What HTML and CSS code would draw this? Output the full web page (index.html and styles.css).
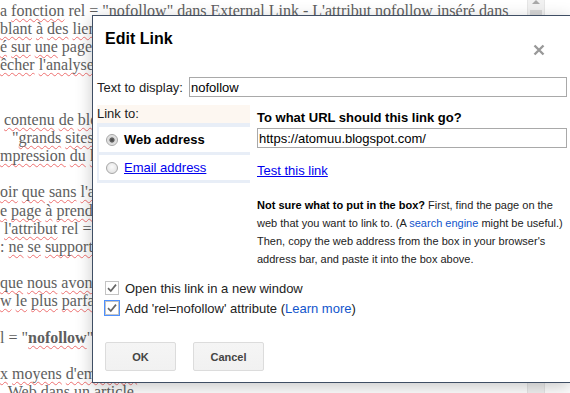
FILE: index.html
```html
<!DOCTYPE html>
<html lang="fr">
<head>
    <meta charset="UTF-8">
    <meta name="viewport" content="width=device-width, initial-scale=1.0">
    <title>Edit Link</title>
    <link rel="stylesheet" href="styles.css">
</head>
<body>
    <div class="page">
        <div class="doc">
            <div class="line">a <span class="sp">fonction</span> rel = "nofollow" dans External Link - L'attribut nofollow inséré dans</div>
            <div class="line"><span class="sp">blant</span> <span class="sp">à</span> <span class="sp">des</span> <span class="sp">liens</span> externes vers des pages non fiables</div>
            <div class="line"><span class="sp">é</span> <span class="sp">sur</span> <span class="sp">une</span> page de votre blog permet de</div>
            <div class="line"><span class="sp">êcher</span> <span class="sp">l'analyse</span> de ces liens par les robots</div>
            <div class="line"></div>
            <div class="line"></div>
            <div class="line"> <span class="sp">contenu</span> <span class="sp">de</span> <span class="sp">blog</span> qui pointe vers</div>
            <div class="line">   "<span class="sp">grands</span> <span class="sp">sites</span> <span class="sp">g</span>énéralistes"</div>
            <div class="line"><span class="sp">mpression</span> <span class="sp">du</span> <span class="sp">lecteur</span></div>
            <div class="line"></div>
            <div class="line"><span class="sp">oir</span> <span class="sp">que</span> <span class="sp">sans</span> <span class="sp">l'attribut</span></div>
            <div class="line"><span class="sp">e</span> <span class="sp">page</span> <span class="sp">à</span> <span class="sp">prendre</span></div>
            <div class="line"> <span class="sp">l'attribut</span> rel = nofollow</div>
            <div class="line">: <span class="sp">ne</span> <span class="sp">se</span> <span class="sp">supporte</span> pas</div>
            <div class="line"></div>
            <div class="line"><span class="sp">que</span> <span class="sp">nous</span> <span class="sp">avons</span> vu</div>
            <div class="line"><span class="sp">w</span> <span class="sp">le</span> <span class="sp">plus</span> <span class="sp">parfait</span></div>
            <div class="line"></div>
            <div class="line">l = "<b class="sp">nofollow</b>"</div>
            <div class="line"></div>
            <div class="line"><span class="sp">x</span> <span class="sp">moyens</span> <span class="sp">d'employer</span> ce</div>
            <div class="line">  Web dans un article</div>
        </div>
        <div class="scrollbar">
            <div class="scroll-arrow"></div>
            <div class="scroll-thumb"></div>
        </div>
    </div>

    <div class="dialog">
        <div class="dialog-head">Edit Link</div>
        <svg class="dialog-close" width="12" height="12" viewBox="0 0 12 12">
            <path d="M1.5 1.5 L10.5 10.5 M10.5 1.5 L1.5 10.5" stroke="#999" stroke-width="2.4" fill="none"/>
        </svg>

        <div class="field-row">
            <label class="field-label">Text to display:</label>
            <input class="text-input display-input" type="text" value="nofollow">
        </div>

        <div class="link-main">
            <div class="link-types">
                <div class="link-types-head">Link to:</div>
                <div class="link-types-list">
                    <div class="link-type">
                        <span class="radio checked"></span>
                        <span class="link-type-label selected">Web address</span>
                    </div>
                    <div class="link-type">
                        <span class="radio"></span>
                        <a class="link-type-label plain-link">Email address</a>
                    </div>
                </div>
            </div>

            <div class="link-target">
                <div class="target-title">To what URL should this link go?</div>
                <input class="text-input url-input" type="text" value="https://atomuu.blogspot.com/">
                <div class="test-link"><a class="plain-link">Test this link</a></div>
                <div class="help">
                    <b>Not sure what to put in the box?</b> First, find the page on the<br>
                    web that you want to link to. (A <a class="blue-link">search engine</a> might be useful.)<br>
                    Then, copy the web address from the box in your browser's<br>
                    address bar, and paste it into the box above.
                </div>
            </div>
        </div>

        <div class="options">
            <div class="option">
                <svg class="check" width="14" height="14" viewBox="0 0 14 14">
                    <rect x="0.5" y="0.5" width="13" height="13" fill="#fff" stroke="#c4c4c4"/>
                    <path d="M3 7.2 L5.8 10 L11 3.6" stroke="#666" stroke-width="1.7" fill="none"/>
                </svg>
                <span>Open this link in a new window</span>
            </div>
            <div class="option">
                <svg class="check focused" width="14" height="14" viewBox="0 0 14 14">
                    <rect x="0.5" y="0.5" width="13" height="13" fill="#fff" stroke="#c4c4c4"/>
                    <path d="M3 7.2 L5.8 10 L11 3.6" stroke="#666" stroke-width="1.7" fill="none"/>
                </svg>
                <span>Add 'rel=nofollow' attribute (<a class="blue-link">Learn more</a>)</span>
            </div>
        </div>

        <div class="buttons">
            <button class="btn">OK</button>
            <button class="btn">Cancel</button>
        </div>
    </div>
</body>
</html>
```

FILE: styles.css
```css
* {
    margin: 0;
    padding: 0;
    box-sizing: border-box;
}

body {
    background: #fff;
    overflow: hidden;
}

/* page behind the dialog */

.page {
    display: flex;
    height: 393px;
}

.doc {
    width: 527px;
    padding-top: 2px;
    overflow: hidden;
    font-family: "Liberation Serif", "Times New Roman", serif;
    font-size: 16px;
    line-height: 18.15px;
    color: #5e5e5e;
}

.line {
    height: 18.15px;
    white-space: pre;
}

.sp {
    text-decoration: underline wavy #ee7070;
    text-decoration-thickness: 1px;
    text-underline-offset: 2px;
    text-decoration-skip-ink: none;
}

.scrollbar {
    width: 18px;
    background: #f1f1f1;
    border-left: 1px solid #e6e6e6;
    border-right: 1px solid #e6e6e6;
    padding-left: 2px;
}

.scroll-arrow {
    width: 0;
    height: 0;
    margin: 0 0 0 2px;
    border-left: 4px solid transparent;
    border-right: 4px solid transparent;
    border-bottom: 4px solid #a8a8a8;
}

.scroll-thumb {
    width: 12px;
    height: 60px;
    margin-top: 6px;
    background: #d6d6d6;
}

/* dialog */

.dialog {
    position: absolute;
    left: 92px;
    top: 15px;
    width: 478px;
    height: 368px;
    background: #fff;
    border: 1px solid #3f4e64;
    border-right: none;
    box-shadow: 0 4px 16px rgba(0, 0, 0, 0.22);
    font-family: "Liberation Sans", Arial, sans-serif;
    font-size: 13px;
    color: #222;
}

.dialog-head {
    height: 61px;
    padding: 13px 12px 0;
    font-size: 16px;
    font-weight: bold;
    line-height: 20px;
    color: #000;
}

.dialog-close {
    position: absolute;
    left: 440px;
    top: 28px;
}

.field-row {
    display: flex;
    align-items: center;
    gap: 6px;
    padding-left: 4px;
}

.field-label {
    color: #222;
}

.text-input {
    height: 20px;
    border: 1px solid #a9a9a9;
    padding: 0 1px;
    font-family: "Liberation Sans", Arial, sans-serif;
    font-size: 13px;
    color: #000;
    outline: none;
}

.display-input {
    width: 378px;
}

.link-main {
    display: grid;
    grid-template-columns: 153px 310px;
    column-gap: 7px;
    padding-left: 4px;
    margin-top: 8px;
}

.link-types-head {
    height: 18px;
    line-height: 18px;
    background: #fdf7f1;
}

.link-types-list {
    display: flex;
    flex-direction: column;
    gap: 3px;
    padding: 4px 0 3px 2px;
    background: #e8eef7;
}

.link-type {
    display: flex;
    align-items: center;
    gap: 6px;
    height: 25px;
    padding-left: 7px;
    background: #fff;
}

.radio {
    width: 12px;
    height: 12px;
    border-radius: 50%;
    border: 1px solid #a6a6a6;
    background: radial-gradient(circle at 50% 40%, #fafafa 0%, #dcdcdc 100%);
}

.radio.checked {
    background: radial-gradient(circle, #444 0, #666 2.2px, #d8d8d8 3px, #f4f4f4 100%);
}

.link-type-label.selected {
    font-weight: bold;
    color: #000;
}

.plain-link {
    color: #00e;
    text-decoration: underline;
    cursor: pointer;
}

.blue-link {
    color: #15c;
    cursor: pointer;
}

.link-target {
    padding-top: 4px;
}

.target-title {
    font-weight: bold;
    line-height: 18px;
    color: #000;
}

.url-input {
    display: block;
    width: 310px;
    margin-top: 1px;
}

.test-link {
    margin-top: 14px;
    line-height: 18px;
}

.help {
    margin-top: 16px;
    font-size: 11px;
    line-height: 18px;
    color: #222;
    white-space: nowrap;
}

.help b {
    color: #000;
}

.options {
    display: flex;
    flex-direction: column;
    padding-left: 12px;
    margin-top: 10px;
}

.option {
    display: flex;
    align-items: center;
    gap: 6px;
    height: 20px;
}

.check.focused {
    outline: 1px solid #4d90fe;
}

.buttons {
    display: flex;
    gap: 17px;
    padding-left: 12px;
    margin-top: 24px;
}

.btn {
    width: 71px;
    height: 29px;
    border: 1px solid #dcdcdc;
    border-radius: 2px;
    background: linear-gradient(#f5f5f5, #f1f1f1);
    font-family: "Liberation Sans", Arial, sans-serif;
    font-size: 11px;
    font-weight: bold;
    color: #444;
}
```
